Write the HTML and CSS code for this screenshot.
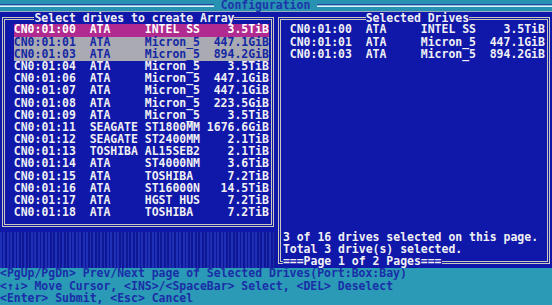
FILE: index.html
```html
<!DOCTYPE html>
<html lang="en">
<head>
  <meta charset="UTF-8">
  <title>Configuration</title>
  <link rel="stylesheet" href="styles.css">
</head>
<body>
  <div class="screen">
    <div class="topbar">
      <div class="rule rule-left"></div>
      <div class="bar-title"> Configuration </div>
      <div class="rule rule-right"></div>
    </div>

    <div class="main">
      <div class="left">
        <div class="panel panel-left">
          <div class="frame">
            <div class="frame-title title-left">Select drives to create Array</div>
            <div class="row current"><span>CN0:01:00</span><span>ATA</span><span>INTEL SS</span><span class="size">3.5TiB</span></div>
            <div class="row picked"><span>CN0:01:01</span><span>ATA</span><span>Micron_5</span><span class="size">447.1GiB</span></div>
            <div class="row picked"><span>CN0:01:03</span><span>ATA</span><span>Micron_5</span><span class="size">894.2GiB</span></div>
            <div class="row"><span>CN0:01:04</span><span>ATA</span><span>Micron_5</span><span class="size">3.5TiB</span></div>
            <div class="row"><span>CN0:01:06</span><span>ATA</span><span>Micron_5</span><span class="size">447.1GiB</span></div>
            <div class="row"><span>CN0:01:07</span><span>ATA</span><span>Micron_5</span><span class="size">447.1GiB</span></div>
            <div class="row"><span>CN0:01:08</span><span>ATA</span><span>Micron_5</span><span class="size">223.5GiB</span></div>
            <div class="row"><span>CN0:01:09</span><span>ATA</span><span>Micron_5</span><span class="size">3.5TiB</span></div>
            <div class="row"><span>CN0:01:11</span><span>SEAGATE</span><span>ST1800MM</span><span class="size">1676.6GiB</span></div>
            <div class="row"><span>CN0:01:12</span><span>SEAGATE</span><span>ST2400MM</span><span class="size">2.1TiB</span></div>
            <div class="row"><span>CN0:01:13</span><span>TOSHIBA</span><span>AL15SEB2</span><span class="size">2.1TiB</span></div>
            <div class="row"><span>CN0:01:14</span><span>ATA</span><span>ST4000NM</span><span class="size">3.6TiB</span></div>
            <div class="row"><span>CN0:01:15</span><span>ATA</span><span>TOSHIBA</span><span class="size">7.2TiB</span></div>
            <div class="row"><span>CN0:01:16</span><span>ATA</span><span>ST16000N</span><span class="size">14.5TiB</span></div>
            <div class="row"><span>CN0:01:17</span><span>ATA</span><span>HGST HUS</span><span class="size">7.2TiB</span></div>
            <div class="row"><span>CN0:01:18</span><span>ATA</span><span>TOSHIBA</span><span class="size">7.2TiB</span></div>
          </div>
        </div>
        <div class="shade"></div>
      </div>

      <div class="panel panel-right">
        <div class="frame">
          <div class="frame-title title-right">Selected Drives</div>
          <div class="row"><span>CN0:01:00</span><span>ATA</span><span>INTEL SS</span><span class="size">3.5TiB</span></div>
          <div class="row"><span>CN0:01:01</span><span>ATA</span><span>Micron_5</span><span class="size">447.1GiB</span></div>
          <div class="row"><span>CN0:01:03</span><span>ATA</span><span>Micron_5</span><span class="size">894.2GiB</span></div>
          <div class="spacer"></div>
          <div class="status">3 of 16 drives selected on this page.</div>
          <div class="status">Total 3 drive(s) selected.</div>
          <div class="page-label">===Page 1 of 2 Pages===</div>
        </div>
      </div>
    </div>

    <div class="help">
      <div class="help-line">&lt;PgUp/PgDn&gt; Prev/Next page of Selected Drives(Port:Box:Bay)</div>
      <div class="help-line">&lt;↑↓&gt; Move Cursor, &lt;INS&gt;/&lt;SpaceBar&gt; Select, &lt;DEL&gt; Deselect</div>
      <div class="help-line">&lt;Enter&gt; Submit, &lt;Esc&gt; Cancel</div>
    </div>
  </div>
</body>
</html>
```

FILE: styles.css
```css
body {
  margin: 0;
  background: #1018aa;
  font-family: "DejaVu Sans Mono", "Liberation Mono", monospace;
  font-weight: bold;
  font-size: 11.46px;
  color: #f0f0f4;
}
.screen {
  width: 552px;
  height: 305px;
  display: grid;
  grid-template-rows: 12.2px 256.2px 36.6px;
  overflow: hidden;
}

/* title bar */
.topbar {
  background: #2892b2;
  border-bottom: 1px solid #9aaec0;
  box-sizing: border-box;
  display: flex;
  align-items: center;
  line-height: 11.2px;
  color: #1c36aa;
}
.bar-title {
  white-space: pre;
}
.rule {
  height: 1px;
  border-top: 1px solid #2444a8;
  border-bottom: 1px solid #dceef4;
  background: #8cc4d8;
}
.rule-left {
  width: 31ch;
}
.rule-right {
  flex: 1;
}

/* panels */
.main {
  display: grid;
  grid-template-columns: 276px 276px;
  overflow: hidden;
}
.left {
  display: flex;
  flex-direction: column;
}
.panel {
  background: #1018aa;
  padding: 4.6px 2px;
  box-sizing: border-box;
}
.panel-left {
  height: 219.6px;
}
.frame {
  border: 3px double #cacabc;
  height: 100%;
  box-sizing: border-box;
  padding: 0 1.9px 0 8.8px;
  display: flex;
  flex-direction: column;
}
.frame-title {
  margin-top: -7.6px;
  height: 12.2px;
  line-height: 12.2px;
  align-self: flex-start;
  background: #1018aa;
}
.title-left {
  margin-left: 3ch;
}
.title-right {
  margin-left: 11ch;
}
.shade {
  flex: 1;
  background: repeating-linear-gradient(90deg, #2030b6 0 1.7px, #0e1896 1.7px 3.45px);
}

/* drive rows */
.row {
  display: grid;
  grid-template-columns: 11ch 8ch 9ch 9ch;
  height: 12.2px;
  line-height: 11.2px;
  padding-bottom: 1px;
  box-sizing: border-box;
  white-space: pre;
}
.row .size {
  text-align: right;
}
.row.current {
  background: #b02a90;
  color: #ffffff;
}
.row.picked {
  background: #aaaab2;
  color: #1428a4;
}
.spacer {
  flex: 1;
}
.status {
  margin-left: -1ch;
  height: 12.2px;
  line-height: 11.2px;
  white-space: pre;
}
.page-label {
  margin-left: -1ch;
  margin-bottom: -7.6px;
  height: 12.2px;
  line-height: 11.2px;
  align-self: flex-start;
  background: #1018aa;
  white-space: pre;
}

/* key help */
.help {
  background: #2a9ab6;
  color: #1a2ea8;
}
.help-line {
  height: 12.2px;
  line-height: 11.2px;
  white-space: pre;
}
```
